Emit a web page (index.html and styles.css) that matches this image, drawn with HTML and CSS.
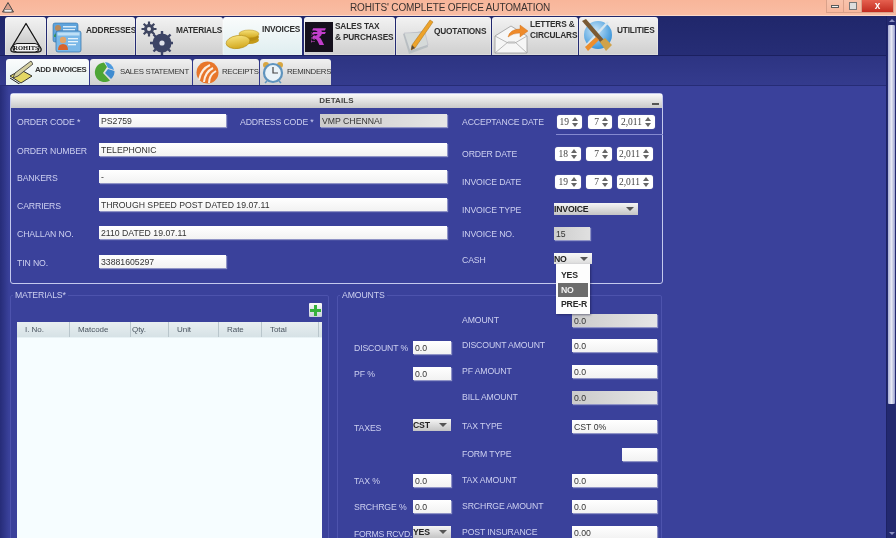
FILE: index.html
```html
<!DOCTYPE html>
<html lang="en">
<head>
<meta charset="utf-8">
<title>Rohits' Complete Office Automation</title>
<link rel="stylesheet" href="styles.css">
</head>
<body>
<div class="app">
  <header class="titlebar">
    <svg class="app-icon" width="14" height="13" viewBox="0 0 14 13"><path d="M7 1.5 12.5 11H1.5Z" fill="#d9a08c" stroke="#444" stroke-width="1" stroke-linejoin="round"/><rect x="3" y="8.5" width="8" height="2.5" rx="1" fill="#eee" stroke="#444" stroke-width=".5"/></svg>
    <span class="title-text">ROHITS' COMPLETE OFFICE AUTOMATION</span>
    <div class="win-btns">
      <span class="win-btn"><i class="min-glyph"></i></span>
      <span class="win-btn"><i class="max-glyph"></i></span>
      <span class="win-btn win-close">x</span>
    </div>
  </header>
  <div class="shell">
    <div class="main">
      <nav class="topnav">
        <div class="tab t-logo">
          <svg width="36" height="33" viewBox="0 0 36 33"><defs><linearGradient id="lg" x1="0" y1="0" x2="0" y2="1"><stop offset="0" stop-color="#ececec"/><stop offset="1" stop-color="#bbb"/></linearGradient></defs><path d="M18 2.500 33 27.500Q34 31 30 31H6Q2 31 3 27.500Z" fill="url(#lg)" stroke="#151515" stroke-width="1.300" stroke-linejoin="round"/><rect x="5" y="22.500" width="26" height="8.500" rx="4" fill="#f2f2f2" stroke="#151515" stroke-width="1"/><text x="18" y="29" text-anchor="middle" class="logo-text">ROHITS</text></svg>
        </div>
        <div class="tab t-addr">
          <svg width="32" height="33" viewBox="0 0 32 33"><rect x="3" y="2" width="25" height="19" rx="2" fill="#5fa4dc" stroke="#2f6ea8" stroke-width=".6"/><rect x="13" y="5" width="13" height="1.500" fill="#d8ecfa"/><rect x="13" y="8" width="12" height="1.500" fill="#d8ecfa"/><circle cx="8" cy="7" r="3" fill="#b98a5c"/><path d="M4 14q4-5 8 0v2H4Z" fill="#3d9a52"/><rect x="6" y="10" width="25" height="21" rx="2" fill="#7ab8e8" stroke="#2f6ea8" stroke-width=".7"/><rect x="7.500" y="11.500" width="22" height="3" fill="#bfe0f6"/><rect x="18" y="17" width="10" height="1.300" fill="#e6f3fb"/><rect x="18" y="20" width="10" height="1.300" fill="#e6f3fb"/><rect x="18" y="23" width="8" height="1.300" fill="#e6f3fb"/><circle cx="13" cy="19" r="3.200" fill="#e2a468"/><path d="M8 29q0-6 5-6t5 6Z" fill="#d8642c"/></svg>
          <span class="tab-text">ADDRESSES</span>
        </div>
        <div class="tab t-mat">
          <svg width="33" height="35" viewBox="0 0 33 35"><g fill="#454c68"><circle cx="9" cy="9" r="5"/><g stroke="#3e4560" stroke-width="2.200"><path d="M9 1.500v15M1.500 9h15M3.700 3.700l10.600 10.600M14.300 3.700 3.700 14.300"/></g><circle cx="22" cy="23" r="9.500" fill="#3d4466"/><g stroke="#3d4466" stroke-width="2.400"><path d="M22 11v24M10 23h24M13.500 14.500l17 17M30.500 14.500l-17 17"/></g></g><circle cx="9" cy="9" r="2" fill="#e6e6e6"/><circle cx="22" cy="23" r="2.600" fill="#dfe1ea"/></svg>
          <span class="tab-text">MATERIALS</span>
        </div>
        <div class="tab t-inv is-active">
          <svg width="35" height="24" viewBox="0 0 35 24"><defs><linearGradient id="au" x1="0" y1="0" x2="0" y2="1"><stop offset="0" stop-color="#f7e27a"/><stop offset="1" stop-color="#d2a81e"/></linearGradient></defs><ellipse cx="24" cy="13" rx="10" ry="4" fill="#c49a18"/><ellipse cx="24" cy="10" rx="10" ry="4" fill="#b88e14"/><ellipse cx="24" cy="7" rx="10" ry="4" fill="url(#au)" stroke="#b88e14" stroke-width=".5"/><ellipse cx="13" cy="15" rx="12" ry="6.500" fill="url(#au)" stroke="#b08a14" stroke-width=".6" transform="rotate(-8 13 15)"/></svg>
          <span class="tab-text">INVOICES</span>
        </div>
        <div class="tab t-tax">
          <div class="tax-tile"><span class="tax-word">TAX</span><span class="rupee">₹</span></div>
          <span class="tab-text two-line">SALES TAX<br>&amp; PURCHASES</span>
        </div>
        <div class="tab t-quo">
          <svg width="34" height="36" viewBox="0 0 34 36"><path d="M3 15 24 12 28 28 9 35Z" fill="#b9c0c2"/><path d="M4 14 25 13 28 26 10 32Z" fill="#d5dad9" stroke="#aab" stroke-width=".4"/><path d="M30 1 33 3 15 29 11 31 12 26Z" fill="#eda32a" stroke="#a96e12" stroke-width=".5"/><path d="M12 26 11 31 15 29Z" fill="#5a4a3a"/></svg>
          <span class="tab-text">QUOTATIONS</span>
        </div>
        <div class="tab t-let">
          <svg width="36" height="34" viewBox="0 0 36 34"><path d="M1 15 17 5 33 15V32H1Z" fill="#f6f6f6" stroke="#9a9a9a" stroke-width=".8"/><path d="M1 32 14 21h7L33 32M1 15l13 7h7l12-7" fill="none" stroke="#a9a9a9" stroke-width=".8"/><path d="M14 16q2-8 12-8V4l8 6-8 6v-4q-7 0-12 4Z" fill="#ee8a2a" stroke="#c96a14" stroke-width=".4"/></svg>
          <span class="tab-text two-line">LETTERS &amp;<br>CIRCULARS</span>
        </div>
        <div class="tab t-util">
          <svg width="35" height="36" viewBox="0 0 35 36"><defs><radialGradient id="ball" cx=".4" cy=".35" r=".7"><stop offset="0" stop-color="#cde7f8"/><stop offset="1" stop-color="#2f8fd8"/></radialGradient></defs><circle cx="18" cy="17" r="14" fill="url(#ball)"/><path d="M6 28 28 4" stroke="#d8e6ee" stroke-width="2.400"/><path d="M2 3 6 1 24 22 21 25Z" fill="#7a5a34"/><path d="M20 24 25 20 32 27 26 33Z" fill="#cfa24a"/><path d="M5 29 16 19 19 22 8 33Z" fill="#ed8e2c"/></svg>
          <span class="tab-text">UTILITIES</span>
        </div>
      </nav>
      <div class="subnav">
        <div class="subtab st-add is-active">
          <svg width="24" height="24" viewBox="0 0 24 24"><path d="M1 16 12 10 23 16 12 23Z" fill="#e3d764" stroke="#222" stroke-width=".9"/><path d="M1 18 12 25" stroke="#222" stroke-width="1"/><path d="M22 1 24 4 9 16 4 18 6 13Z" fill="#d4cfa0" stroke="#333" stroke-width=".8"/></svg>
          <span class="subtab-text strong">ADD INVOICES</span>
        </div>
        <div class="subtab st-sales">
          <svg width="23" height="22" viewBox="0 0 23 22"><path d="M11 1.500A9.800 9.800 0 1 0 17 19.500L10 12 14 6Z" fill="#4ea535"/><path d="M12 1A9.800 9.800 0 0 1 21 9L15 7Z" fill="#4c9adf"/><path d="M21.500 10A9.800 9.800 0 0 1 18 18L12 12 15 8Z" fill="#3f8bd0"/></svg>
          <span class="subtab-text">SALES STATEMENT</span>
        </div>
        <div class="subtab st-rec">
          <svg width="23" height="23" viewBox="0 0 23 23"><circle cx="11.500" cy="11.500" r="11" fill="#e8762a"/><path d="M3 19Q5 8 14 4M8 21Q9 11 17 7M13 22Q13 14 20 10" fill="none" stroke="#fbeee0" stroke-width="2"/></svg>
          <span class="subtab-text">RECEIPTS</span>
        </div>
        <div class="subtab st-rem">
          <svg width="22" height="23" viewBox="0 0 22 23"><circle cx="4" cy="4" r="3" fill="#d8a640"/><circle cx="18" cy="4" r="3" fill="#d8a640"/><circle cx="11" cy="12" r="9" fill="#eaf3f8" stroke="#5f94be" stroke-width="2.200"/><path d="M11 6v6h5" fill="none" stroke="#444" stroke-width="1.200"/><path d="M5 20 3 22M17 20l2 2" stroke="#5f94be" stroke-width="1.500"/></svg>
          <span class="subtab-text">REMINDERS</span>
        </div>
      </div>
      <main class="content">
        <section class="panel">
          <div class="panel-head"><span>DETAILS</span><i class="collapse"></i></div>
          <div class="panel-body">
            <div class="details-left">
              <label class="lbl">ORDER CODE *</label>
              <div class="pair">
                <span class="field f-code">PS2759</span>
                <label class="lbl addr-lbl">ADDRESS CODE *</label>
                <span class="field field-off f-addr">VMP CHENNAI</span>
              </div>
              <label class="lbl">ORDER NUMBER</label><span class="field">TELEPHONIC</span>
              <label class="lbl">BANKERS</label><span class="field">-</span>
              <label class="lbl">CARRIERS</label><span class="field">THROUGH SPEED POST DATED 19.07.11</span>
              <label class="lbl">CHALLAN NO.</label><span class="field">2110 DATED 19.07.11</span>
              <label class="lbl">TIN NO.</label><span class="field f-code">33881605297</span>
            </div>
            <div class="details-right">
              <div class="r-row">
                <label class="lbl r-lbl">ACCEPTANCE DATE</label>
                <div class="spins spins-first">
                  <span class="spin s-d1">19<i class="arrows"></i></span>
                  <span class="spin s-m1">7<i class="arrows"></i></span>
                  <span class="spin s-y1">2,011<i class="arrows"></i></span>
                </div>
              </div>
              <div class="rule"></div>
              <div class="r-row">
                <label class="lbl r-lbl">ORDER DATE</label>
                <div class="spins">
                  <span class="spin s-d">18<i class="arrows"></i></span>
                  <span class="spin s-d">7<i class="arrows"></i></span>
                  <span class="spin s-y">2,011<i class="arrows"></i></span>
                </div>
              </div>
              <div class="r-row">
                <label class="lbl r-lbl">INVOICE DATE</label>
                <div class="spins">
                  <span class="spin s-d">19<i class="arrows"></i></span>
                  <span class="spin s-d">7<i class="arrows"></i></span>
                  <span class="spin s-y">2,011<i class="arrows"></i></span>
                </div>
              </div>
              <div class="r-row">
                <label class="lbl r-lbl">INVOICE TYPE</label>
                <span class="select sel-type">INVOICE<i class="caret"></i></span>
              </div>
              <div class="r-row">
                <label class="lbl r-lbl">INVOICE NO.</label>
                <span class="field field-off f-no">15</span>
              </div>
              <div class="r-row">
                <label class="lbl r-lbl">CASH</label>
                <div class="sel-wrap">
                  <span class="select sel-cash">NO<i class="caret"></i></span>
                  <ul class="menu">
                    <li>YES</li>
                    <li class="menu-on">NO</li>
                    <li>PRE-R</li>
                  </ul>
                </div>
              </div>
            </div>
          </div>
        </section>
        <div class="lower">
          <fieldset class="group g-mat">
            <legend>MATERIALS*</legend>
            <div class="mat-tools">
              <span class="add-btn"><svg width="11" height="11" viewBox="0 0 11 11"><path d="M4 0h3v4h4v3H7v4H4V7H0V4h4Z" fill="#35b13c"/></svg></span>
            </div>
            <div class="table">
              <div class="thead">
                <span class="c1">I. No.</span><span class="c2">Matcode</span><span class="c3">Qty.</span><span class="c4">Unit</span><span class="c5">Rate</span><span class="c6">Total</span>
              </div>
            </div>
          </fieldset>
          <fieldset class="group g-amt">
            <legend>AMOUNTS</legend>
            <div class="amounts">
              <div class="amt-left">
                <label class="lbl a1">DISCOUNT %</label><span class="field a1f">0.0</span>
                <label class="lbl a2">PF %</label><span class="field a2f">0.0</span>
                <label class="lbl a3">TAXES</label><span class="select a3f">CST<i class="caret"></i></span>
                <label class="lbl a4">TAX %</label><span class="field a4f">0.0</span>
                <label class="lbl a5">SRCHRGE %</label><span class="field a5f">0.0</span>
                <label class="lbl a6">FORMS RCVD.</label><span class="select a6f">YES<i class="caret"></i></span>
              </div>
              <div class="amt-right">
                <label class="lbl">AMOUNT</label><span class="field field-off">0.0</span>
                <label class="lbl">DISCOUNT AMOUNT</label><span class="field">0.0</span>
                <label class="lbl">PF AMOUNT</label><span class="field">0.0</span>
                <label class="lbl">BILL AMOUNT</label><span class="field field-off">0.0</span>
                <label class="lbl">TAX TYPE</label><span class="field">CST 0%</span>
                <label class="lbl">FORM TYPE</label><span class="field f-form"></span>
                <label class="lbl">TAX AMOUNT</label><span class="field">0.0</span>
                <label class="lbl">SRCHRGE AMOUNT</label><span class="field">0.0</span>
                <label class="lbl">POST INSURANCE</label><span class="field">0.00</span>
              </div>
            </div>
          </fieldset>
        </div>
      </main>
    </div>
    <aside class="scrollbar">
      <i class="sb-up"></i>
      <div class="sb-thumb"></div>
      <div class="sb-track"></div>
      <i class="sb-down"></i>
    </aside>
  </div>
</div>
</body>
</html>
```

FILE: styles.css
```css
* { box-sizing: border-box; }
html, body { margin: 0; padding: 0; }
body { width: 896px; height: 538px; overflow: hidden; font-family: "Liberation Sans", Arial, sans-serif; background: #3a419b; }
.app { width: 896px; height: 538px; display: flex; flex-direction: column; overflow: hidden; filter: blur(.3px); }
svg { flex: none; }

/* title bar */
.titlebar { flex: 0 0 16px; height: 16px; display: flex; align-items: flex-start; background: linear-gradient(#f8b69a, #f9bda4); border-bottom: 1px solid #fbd9c9; position: relative; }
.app-icon { margin: 1px 0 0 1px; }
.title-text { position: absolute; left: 350px; top: 2px; font-size: 10px; line-height: 12px; color: #3a3230; letter-spacing: -.14px; white-space: nowrap; }
.win-btns { margin-left: auto; margin-right: 2px; display: flex; height: 13px; }
.win-btn { width: 18px; height: 13px; border: 1px solid #d9a18a; border-top: 0; display: flex; align-items: center; justify-content: center; background: linear-gradient(#f8c3ac, #f6b89e); }
.win-btn + .win-btn { border-left: 0; }
.min-glyph { width: 8px; height: 3px; background: #f2f2f2; border: 1px solid #5a5a5a; }
.max-glyph { width: 8px; height: 8px; background: #ddd; border: 1px solid #777; }
.win-close { width: 32px; background: linear-gradient(#e5604f, #c22c20); color: #fff; font-size: 10px; line-height: 10px; font-weight: bold; }

.shell { flex: 1; display: flex; min-height: 0; }
.main { flex: 1; min-width: 0; display: flex; flex-direction: column; }

/* top nav */
.topnav { flex: 0 0 40px; display: flex; padding: 1px 0 0 5px; background: linear-gradient(#20276b, #262d76); border-bottom: 1px solid #1b2060; gap: 1px; }
.tab { height: 38px; display: flex; align-items: flex-start; background: linear-gradient(#f2f2f2, #cfcfcf); border-radius: 3px 3px 0 0; box-shadow: inset 0 0 0 1px rgba(255,255,255,.25); overflow: hidden; }
.tab.is-active { background: linear-gradient(#fafcfc, #dfeef0); }
.tab-text { font-size: 8.3px; line-height: 11px; font-weight: bold; color: #2e2e2e; margin-top: 7px; white-space: nowrap; letter-spacing: -.18px; }
.two-line { margin-top: 2px; }
.t-logo { width: 41px; padding: 4px 0 0 3px; }
.logo-text { font-family: "Liberation Serif", serif; font-size: 6.5px; font-weight: bold; fill: #111; }
.t-addr { width: 88px; padding-top: 4px; padding-left: 3px; gap: 4px; }
.t-addr .tab-text { margin-top: 4px; }
.t-mat { width: 87px; padding-top: 3px; padding-left: 4px; gap: 3px; margin-right: -1px; }
.t-mat .tab-text { margin-top: 5px; }
.t-inv { width: 79px; padding-top: 10px; padding-left: 2px; gap: 2px; }
.t-inv .tab-text { margin-top: -3px; }
.t-tax { width: 91px; margin-left: 1px; padding-top: 5px; padding-left: 1px; gap: 2px; }
.t-tax .two-line { margin-top: -1px; }
.tax-tile { width: 28px; height: 30px; background: #15101c; position: relative; display: flex; align-items: center; justify-content: center; flex: none; }
.rupee { font-family: "DejaVu Sans", sans-serif; font-size: 23px; font-weight: bold; line-height: 24px; color: #c23ecb; }
.tax-word { position: absolute; left: 3px; top: 12px; font-size: 6px; line-height: 7px; color: #d24fd0; transform: rotate(-90deg); }
.t-quo { width: 95px; padding-top: 2px; padding-left: 4px; }
.t-quo .tab-text { margin-top: 7px; }
.t-let { width: 86px; padding-top: 4px; padding-left: 2px; }
.t-let .two-line { margin-top: -2px; }
.t-util { width: 79px; padding-top: 1px; padding-left: 1px; gap: 2px; }
.t-util .tab-text { margin-top: 7px; }

/* sub nav */
.subnav { flex: 0 0 30px; display: flex; gap: 1px; padding: 3px 0 0 6px; background: linear-gradient(#2d3482, #343b8e); border-bottom: 1px solid #262c76; }
.subtab { height: 26px; display: flex; align-items: center; gap: 3px; background: linear-gradient(#f0f0f0, #d0d0d0); border-radius: 3px 3px 0 0; padding-left: 3px; }
.subtab.is-active { background: linear-gradient(#fbfdfd, #e4eef0); }
.subtab-text { font-size: 7.8px; line-height: 10px; color: #333; white-space: nowrap; letter-spacing: -.3px; margin-top: -1px; }
.subtab-text.strong { font-weight: bold; margin-top: -4px; margin-left: -1px; letter-spacing: -.42px; }
.st-add { width: 83px; }
.st-sales { width: 102px; gap: 4px; }
.st-rec { width: 66px; gap: 3px; }
.st-rem { width: 71px; padding-left: 2px; gap: 3px; }

/* content */
.content { flex: 1; min-height: 0; overflow: hidden; padding: 7px 0 0 10px; background: linear-gradient(90deg, #262c78, #3a419b 9px); }
.panel { width: 653px; height: 191px; border: 1px solid #c4c9ee; border-radius: 3px; overflow: visible; position: relative; }
.panel-head { height: 14px; background: linear-gradient(#fafafa, #c9c9c9); font-size: 8px; font-weight: bold; line-height: 14px; color: #444; display: flex; justify-content: center; position: relative; letter-spacing: .1px; }
.collapse { position: absolute; right: 3px; top: 9px; width: 7px; height: 1.5px; background: #555; }
.panel-body { display: flex; }

.lbl { font-size: 8.7px; line-height: 12px; color: #cdd0f0; white-space: nowrap; letter-spacing: -.12px; }
.field { display: block; height: 13px; background: linear-gradient(#ffffff, #f2f2f2); box-shadow: 1px 1px 1px #8f93c6; font-size: 8.7px; line-height: 14px; color: #333; padding-left: 2px; white-space: nowrap; overflow: hidden; }
.field-off { background: linear-gradient(90deg, #cbcbcb, #e6e6e6); }

.details-left { width: 430px; margin-left: 6px; padding-top: 6px; display: grid; grid-template-columns: 82px 1fr; grid-template-rows: 29px 27px 28px 28px 29px 14px; flex: none; }
.details-left .lbl { padding-top: 2px; }
.pair { display: flex; align-items: flex-start; }
.f-code { width: 127px; }
.addr-lbl { margin-left: 14px; width: 80px; }
.f-addr { width: 127px; }

.details-right { margin-left: 15px; padding-top: 7px; width: 200px; display: grid; grid-template-rows: 19px 13px 28px 28px 24px 26px 20px; position: relative; }
.r-row { display: flex; align-items: flex-start; }
.r-lbl { width: 92px; flex: none; padding-top: 1px; }
.rule { height: 1px; margin-left: 94px; margin-right: -1px; background: #858ad0; }
.spins { display: flex; gap: 5px; margin-left: 1px; }
.spins-first { gap: 6px; margin-left: 3px; }
.spin { height: 14px; background: #fff; border-radius: 3px; font-family: "Liberation Serif", serif; font-size: 9.5px; line-height: 14px; color: #444; display: flex; justify-content: flex-end; align-items: center; padding-right: 3px; box-shadow: 0 0 1px #aab; }
.s-d { width: 26px; }
.s-y { width: 36px; }
.s-d1 { width: 25px; }
.s-m1 { width: 24px; }
.s-y1 { width: 37px; }
.arrows { width: 7px; height: 10px; margin-left: 3px; position: relative; flex: none; }
.arrows::before, .arrows::after { content: ""; position: absolute; left: 0; border-left: 3.500px solid transparent; border-right: 3.500px solid transparent; }
.arrows::before { top: 0; border-bottom: 4px solid #666; }
.arrows::after { bottom: 0; border-top: 4px solid #666; }

.select { display: flex; height: 12px; align-items: center; background: linear-gradient(#f5f5f5, #c4c4c4); font-size: 8.7px; font-weight: bold; line-height: 12px; color: #222; letter-spacing: -.2px; position: relative; }
.caret { position: absolute; right: 4px; top: 4px; border-left: 4px solid transparent; border-right: 4px solid transparent; border-top: 4px solid #555; }
.sel-type { width: 84px; }
.f-no { width: 36px; background: linear-gradient(90deg, #cdcdcd, #e0e0e0); }
.sel-wrap { position: relative; }
.sel-cash { width: 38px; height: 11px; background: linear-gradient(#f8f8f8, #dcdcdc); }
.menu { position: absolute; left: 2px; top: 11px; width: 34px; height: 50px; margin: 0; padding: 4px 2px 0; list-style: none; background: #fdfdfd; box-shadow: 1px 1px 2px rgba(20,20,60,.5); z-index: 2; }
.menu li { height: 15px; font-size: 8.7px; font-weight: bold; line-height: 15px; color: #2a2a2a; padding-left: 3px; letter-spacing: -.2px; }
.menu .menu-on { height: 14px; line-height: 14px; background: #6c6c6c; color: #f2f2f2; }

/* lower groups */
.lower { display: flex; gap: 8px; margin-top: 5px; }
.group { margin: 0; min-width: 0; border: 1px solid #4d53ad; border-radius: 2px; height: 260px; }
.group legend { padding: 0 2px; margin-left: 2px; font-size: 8.7px; line-height: 12px; color: #cdd0f0; letter-spacing: -.12px; }
.g-mat { width: 319px; padding: 0 6px; }
.g-mat legend { margin-left: -4px; }
.g-amt { width: 325px; padding: 0; }
.mat-tools { display: flex; justify-content: flex-end; padding-top: 2px; height: 21px; }
.add-btn { width: 13px; height: 14px; display: flex; align-items: center; justify-content: center; background: linear-gradient(#fafafa, #c8d0da); border-radius: 1px; }
.table { width: 305px; height: 240px; background: #f6fdff; border-radius: 2px 2px 0 0; }
.thead { height: 16px; display: grid; grid-template-columns: 53px 61px 38px 50px 43px 57px; background: linear-gradient(#e8eef0, #d6e2e6); border-bottom: 1px solid #e8f2f5; }
.thead span { font-size: 8px; line-height: 15px; color: #4a5560; border-right: 1px solid #b9c6cc; padding-left: 8px; letter-spacing: -.05px; }
.thead .c3 { padding-left: 0; text-indent: 1px; }

.amounts { display: flex; padding-left: 16px; }
.amt-left { width: 97px; flex: none; padding-top: 40px; display: grid; grid-template-columns: 59px 38px; grid-template-rows: 26px 52px 55px 26px 26px 14px; }
.amt-left .lbl { padding-top: 1px; }
.a3 { padding-top: 3px !important; }
.a6 { padding-top: 2px !important; letter-spacing: -.25px; }
.amt-right { margin-left: 11px; width: 195px; padding-top: 13px; display: grid; grid-template-columns: 110px 85px; grid-template-rows: 25px 26px 26px 29px 28px 26px 26px 26px 14px; }
.f-form { width: 35px; justify-self: end; }

/* scrollbar */
.scrollbar { flex: 0 0 10px; display: flex; flex-direction: column; align-items: center; background: #23296f; border-left: 1px solid #1d2264; }
.sb-up { margin-top: 3px; border-left: 3px solid transparent; border-right: 3px solid transparent; border-bottom: 3px solid #8b90c2; flex: none; }
.sb-thumb { width: 7px; height: 379px; margin-top: 3px; border-radius: 1px; background: linear-gradient(90deg, #a9aed6, #e6e8f4 50%, #9ba0ce); flex: none; }
.sb-track { flex: 1; }
.sb-down { margin-bottom: 3px; border-left: 3px solid transparent; border-right: 3px solid transparent; border-top: 3px solid #8b90c2; flex: none; }
```
